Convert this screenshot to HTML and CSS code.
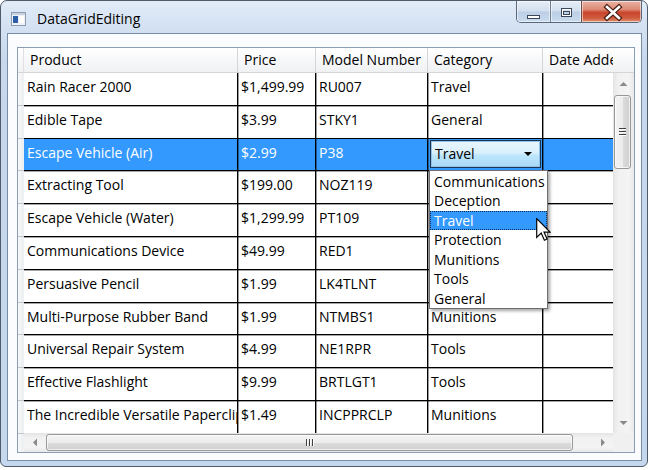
FILE: index.html
```html
<!DOCTYPE html>
<html>
<head>
<meta charset="utf-8">
<title>DataGridEditing</title>
<link rel="stylesheet" href="styles.css">
</head>
<body>
<div class="window">
  <div class="titlebar">
    <svg class="app-icon" width="15" height="14" viewBox="0 0 15 14">
      <rect x="0.5" y="0.5" width="14" height="13" fill="#eef1f5" stroke="#8d9bb0"/>
      <rect x="1" y="1" width="13" height="2" fill="#c9d3df"/>
      <rect x="2" y="4" width="5" height="7" fill="#2d5fa6"/>
      <rect x="8" y="4" width="5" height="7" fill="#ffffff"/>
    </svg>
    <span class="title">DataGridEditing</span>
    <div class="caption-buttons">
      <div class="cbtn cbtn-min">
        <svg width="34" height="22" viewBox="0 0 34 22"><rect x="10.5" y="14.5" width="12" height="3" fill="#fff" stroke="#3b4658"/></svg>
      </div>
      <div class="cbtn cbtn-max">
        <svg width="31" height="22" viewBox="0 0 31 22"><rect x="10.5" y="7.5" width="10" height="8" fill="none" stroke="#3b4658"/><rect x="11.5" y="8.5" width="8" height="6" fill="none" stroke="#fff"/><rect x="12.5" y="10.5" width="6" height="3" fill="none" stroke="#3b4658"/></svg>
      </div>
      <div class="cbtn cbtn-close">
        <svg width="60" height="22" viewBox="0 0 60 22"><path d="M25 6 L37 17 M37 6 L25 17" stroke="#4a1f17" stroke-width="5" stroke-linecap="square"/><path d="M25 6 L37 17 M37 6 L25 17" stroke="#ffffff" stroke-width="2.6" stroke-linecap="square"/></svg>
      </div>
    </div>
  </div>
  <div class="client">
    <div class="datagrid">
      <div class="hdr-corner"></div>
      <div class="headers">
        <div class="colhdr col-product">Product</div>
        <div class="colhdr col-price">Price</div>
        <div class="colhdr col-model">Model Number</div>
        <div class="colhdr col-cat">Category</div>
        <div class="colhdr col-date">Date Added</div>
      </div>
      <div class="hdr-filler"></div>

      <div class="rowheaders">
        <div class="rowhdr"></div><div class="rowhdr"></div><div class="rowhdr"></div><div class="rowhdr"></div>
        <div class="rowhdr"></div><div class="rowhdr"></div><div class="rowhdr"></div><div class="rowhdr"></div>
        <div class="rowhdr"></div><div class="rowhdr"></div><div class="rowhdr"></div><div class="rowhdr"></div>
      </div>

      <div class="rows">
        <div class="row"><div class="cell col-product">Rain Racer 2000</div><div class="cell col-price">$1,499.99</div><div class="cell col-model">RU007</div><div class="cell col-cat">Travel</div><div class="cell col-date"></div></div>
        <div class="row"><div class="cell col-product">Edible Tape</div><div class="cell col-price">$3.99</div><div class="cell col-model">STKY1</div><div class="cell col-cat">General</div><div class="cell col-date"></div></div>
        <div class="row sel"><div class="cell col-product">Escape Vehicle (Air)</div><div class="cell col-price">$2.99</div><div class="cell col-model">P38</div><div class="cell col-cat editing"><div class="combo"><span>Travel</span><span class="combo-arrow"></span></div></div><div class="cell col-date"></div></div>
        <div class="row"><div class="cell col-product">Extracting Tool</div><div class="cell col-price">$199.00</div><div class="cell col-model">NOZ119</div><div class="cell col-cat"></div><div class="cell col-date"></div></div>
        <div class="row"><div class="cell col-product">Escape Vehicle (Water)</div><div class="cell col-price">$1,299.99</div><div class="cell col-model">PT109</div><div class="cell col-cat"></div><div class="cell col-date"></div></div>
        <div class="row"><div class="cell col-product">Communications Device</div><div class="cell col-price">$49.99</div><div class="cell col-model">RED1</div><div class="cell col-cat"></div><div class="cell col-date"></div></div>
        <div class="row"><div class="cell col-product">Persuasive Pencil</div><div class="cell col-price">$1.99</div><div class="cell col-model">LK4TLNT</div><div class="cell col-cat"></div><div class="cell col-date"></div></div>
        <div class="row"><div class="cell col-product">Multi-Purpose Rubber Band</div><div class="cell col-price">$1.99</div><div class="cell col-model">NTMBS1</div><div class="cell col-cat">Munitions</div><div class="cell col-date"></div></div>
        <div class="row"><div class="cell col-product">Universal Repair System</div><div class="cell col-price">$4.99</div><div class="cell col-model">NE1RPR</div><div class="cell col-cat">Tools</div><div class="cell col-date"></div></div>
        <div class="row"><div class="cell col-product">Effective Flashlight</div><div class="cell col-price">$9.99</div><div class="cell col-model">BRTLGT1</div><div class="cell col-cat">Tools</div><div class="cell col-date"></div></div>
        <div class="row"><div class="cell col-product">The Incredible Versatile Paperclip</div><div class="cell col-price">$1.49</div><div class="cell col-model">INCPPRCLP</div><div class="cell col-cat">Munitions</div><div class="cell col-date"></div></div>
      </div>

      <div class="vscroll">
        <div class="sb-btn"><svg width="9" height="5" viewBox="0 0 9 5"><path d="M0.5 5 L4.5 1 L8.5 5 Z" fill="#8a8a8a"/></svg></div>
        <div class="vthumb"><span class="grip-h"></span><span class="grip-h"></span><span class="grip-h"></span></div>
        <div class="sb-space"></div>
        <div class="sb-btn"><svg width="9" height="5" viewBox="0 0 9 5"><path d="M0.5 0 L4.5 4 L8.5 0 Z" fill="#8a8a8a"/></svg></div>
      </div>

      <div class="hscroll">
        <div class="sb-btn"><svg width="5" height="9" viewBox="0 0 5 9"><path d="M5 0.5 L1 4.5 L5 8.5 Z" fill="#8a8a8a"/></svg></div>
        <div class="hthumb"><span class="grip-v"></span><span class="grip-v"></span><span class="grip-v"></span></div>
        <div class="sb-space"></div>
        <div class="sb-btn"><svg width="5" height="9" viewBox="0 0 5 9"><path d="M0 0.5 L4 4.5 L0 8.5 Z" fill="#8a8a8a"/></svg></div>
      </div>
      <div class="sb-corner"></div>

      <div class="popup">
        <div class="popup-item">Communications</div>
        <div class="popup-item">Deception</div>
        <div class="popup-item active">Travel</div>
        <div class="popup-item">Protection</div>
        <div class="popup-item">Munitions</div>
        <div class="popup-item">Tools</div>
        <div class="popup-item">General</div>
      </div>

      <svg class="cursor" width="15" height="23" viewBox="0 0 12.5 19.5">
        <path d="M0.5 0.5 L0.5 16.5 L4.3 12.8 L7 18.8 L9.3 17.8 L6.7 11.9 L11.8 11.9 Z" fill="#ffffff" stroke="#000000" stroke-width="1" stroke-linejoin="miter"/>
      </svg>
    </div>
  </div>
</div>
</body>
</html>
```

FILE: styles.css
```css
* { box-sizing: border-box; }

html, body {
  margin: 0;
  padding: 0;
  background: #ffffff;
}

body {
  width: 650px;
  height: 470px;
  overflow: hidden;
  font-family: "Open Sans", "Liberation Sans", sans-serif;
  font-size: 14px;
  color: #000000;
}

/* ---------- window frame ---------- */
.window {
  width: 648px;
  height: 467px;
  border: 1px solid #505b6a;
  border-radius: 7px 7px 6px 6px;
  background: linear-gradient(180deg, #e2ecf8 0px, #d3e1f2 26px, #c7d8ed 60px, #c5d7ec 100%);
  display: flex;
  flex-direction: column;
  overflow: hidden;
}

.titlebar {
  flex: none;
  height: 32px;
  display: flex;
  align-items: flex-start;
}

.app-icon {
  margin: 11px 0 0 10px;
  flex: none;
}

.title {
  margin: 8px 0 0 11px;
  line-height: 20px;
  font-size: 14px;
  color: #000;
}

.caption-buttons {
  margin-left: auto;
  margin-right: 5px;
  display: flex;
  height: 22px;
  border: 1px solid #5a6679;
  border-top: none;
  border-radius: 0 0 5px 5px;
  overflow: hidden;
}

.cbtn {
  height: 21px;
  box-shadow: inset 0 0 0 1px rgba(255, 255, 255, 0.55);
}

.cbtn svg { display: block; }

.cbtn-min {
  width: 34px;
  border-right: 1px solid #6f7d91;
  background: linear-gradient(180deg, #e6eef7 0%, #d3e0ef 45%, #bccfe4 55%, #c9dbef 100%);
}

.cbtn-max {
  width: 31px;
  border-right: 1px solid #6f4a44;
  background: linear-gradient(180deg, #e6eef7 0%, #d3e0ef 45%, #bccfe4 55%, #c9dbef 100%);
}

.cbtn-close {
  width: 59px;
  background: linear-gradient(180deg, #eab3a4 0%, #dd8a74 40%, #c8452c 55%, #cf5a3d 80%, #e0926f 100%);
}

/* ---------- client area ---------- */
.client {
  flex: 1;
  margin: 0 5px 5px 6px;
  border: 1px solid #7a8ca3;
  background: #fbfcfe;
  padding: 13px 6px 7px 9px;
  display: flex;
  flex-direction: column;
}

.datagrid {
  flex: 1;
  position: relative;
  border: 1px solid #8a9db4;
  background: #ffffff;
  display: grid;
  grid-template-columns: 6px 589px 21px;
  grid-template-rows: 25px 360px 19px;
}

/* headers */
.hdr-corner,
.hdr-filler {
  background: linear-gradient(180deg, #ffffff 0%, #f7f8fa 50%, #f0f1f3 100%);
  border-bottom: 1px solid #d5d5d5;
}

.hdr-corner { border-right: 1px solid #e0e0e0; }

.headers {
  display: flex;
  overflow: hidden;
  background: linear-gradient(180deg, #ffffff 0%, #f7f8fa 50%, #f0f1f3 100%);
  border-bottom: 1px solid #d5d5d5;
}

.colhdr {
  flex: none;
  padding-left: 6px;
  line-height: 24px;
  white-space: nowrap;
  overflow: hidden;
  border-right: 1px solid #d5d5d5;
  color: #000;
}

.col-product { width: 214px; }
.col-price { width: 78px; }
.col-model { width: 112px; }
.col-cat { width: 115px; }
.col-date { width: 110px; }

/* row headers */
.rowheaders {
  grid-row: 2 / 4;
  grid-column: 1;
  overflow: hidden;
  background: #f2f3f5;
}

.rowhdr {
  height: 32.8px;
  border-bottom: 1px solid #c2c6cc;
  background: linear-gradient(90deg, #f7f8f9, #eceef1);
}

/* rows */
.rows {
  overflow: hidden;
  background: #ffffff;
}

.row {
  display: flex;
  height: 32.8px;
  border-bottom: 1px solid #000000;
  box-shadow: 0 1px 0 rgba(0, 0, 0, 0.35);
}

.cell {
  flex: none;
  padding: 4px 0 0 3px;
  line-height: 19px;
  white-space: nowrap;
  overflow: hidden;
  border-right: 1px solid #000000;
  box-shadow: 1px 0 0 rgba(0, 0, 0, 0.4);
}

.cell.col-date {
  border-right: none;
  box-shadow: none;
}

.row.sel {
  background: #3399ff;
  color: #ffffff;
}

.cell.editing {
  padding: 1px 0 0 2px;
}

.combo {
  width: 111px;
  height: 28px;
  border: 1px solid #1d3550;
  box-shadow: inset 0 0 0 1px #8fc3ea;
  background: linear-gradient(180deg, #eaf6fd 0%, #d9f0fc 45%, #bee6fd 55%, #a7d9f5 100%);
  color: #000;
  display: flex;
  align-items: center;
  justify-content: space-between;
  padding: 0 8px 0 4px;
  line-height: 26px;
}

.combo-arrow {
  width: 0;
  height: 0;
  border-left: 4px solid transparent;
  border-right: 4px solid transparent;
  border-top: 4px solid #000;
}

/* scrollbars */
.vscroll {
  display: flex;
  flex-direction: column;
  background: linear-gradient(90deg, #e4e4e4 0%, #f1f1f1 25%, #f4f4f4 75%, #e8e8e8 100%);
}

.hscroll {
  display: flex;
  background: linear-gradient(180deg, #e4e4e4 0%, #f1f1f1 25%, #f4f4f4 75%, #e8e8e8 100%);
}

.sb-btn {
  flex: none;
  width: 20px;
  height: 20px;
  display: flex;
  align-items: center;
  justify-content: center;
}

.vscroll .sb-btn { width: 21px; }
.hscroll .sb-btn { height: 19px; }

.sb-space { flex: 1; }

.vthumb {
  flex: none;
  width: 17px;
  height: 74px;
  margin: 2px 0 0 1px;
  border: 1px solid #989898;
  border-radius: 3px;
  background: linear-gradient(90deg, #f4f4f4 0%, #ececec 50%, #dcdcdc 51%, #d0d0d0 100%);
  box-shadow: inset 0 0 0 1px rgba(255, 255, 255, 0.7);
  display: flex;
  flex-direction: column;
  align-items: center;
  justify-content: center;
  gap: 1px;
}

.grip-h {
  width: 7px;
  height: 2px;
  border-top: 1px solid #3f3f3f;
  border-bottom: 1px solid #ffffff;
}

.hthumb {
  flex: none;
  width: 527px;
  height: 17px;
  margin: 1px 0 0 2px;
  border: 1px solid #989898;
  border-radius: 3px;
  background: linear-gradient(180deg, #f4f4f4 0%, #ececec 50%, #dcdcdc 51%, #d0d0d0 100%);
  box-shadow: inset 0 0 0 1px rgba(255, 255, 255, 0.7);
  display: flex;
  align-items: center;
  justify-content: center;
  gap: 1px;
}

.grip-v {
  width: 2px;
  height: 7px;
  border-left: 1px solid #3f3f3f;
  border-right: 1px solid #ffffff;
}

.sb-corner {
  background: #f0f0f0;
}

/* dropdown popup */
.popup {
  position: absolute;
  left: 411px;
  top: 122px;
  width: 119px;
  border: 1px solid #707070;
  background: #ffffff;
  box-shadow: 2px 2px 3px rgba(0, 0, 0, 0.35);
  padding: 0.5px 0 0 0;
  z-index: 5;
}

.popup-item {
  height: 19.5px;
  line-height: 18px;
  padding-left: 3px;
  border: 1px solid transparent;
  white-space: nowrap;
  color: #000;
}

.popup-item.active {
  background: #3399ff;
  color: #ffffff;
  border: 1px dotted #0a2a55;
}

.cursor {
  position: absolute;
  left: 518px;
  top: 170px;
  z-index: 6;
}
```
